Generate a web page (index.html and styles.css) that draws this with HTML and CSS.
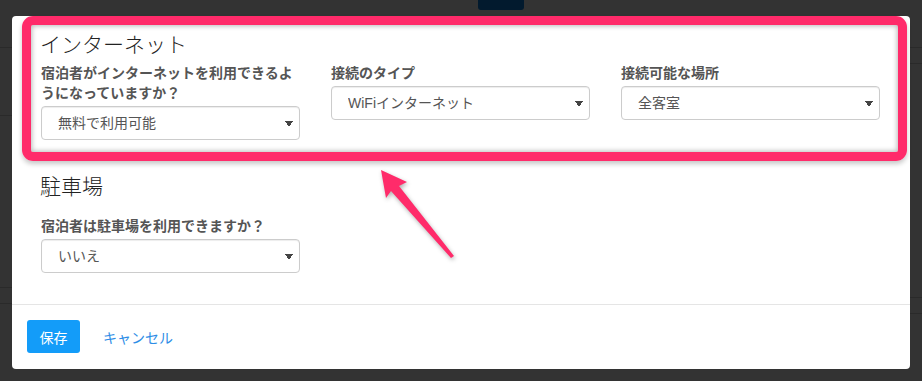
FILE: index.html
```html
<!DOCTYPE html>
<html lang="ja">
<head>
  <meta charset="UTF-8" />
  <meta name="viewport" content="width=device-width, initial-scale=1.0" />
  <title>インターネットと駐車場</title>
  <link rel="stylesheet" href="styles.css">
</head>
<body>
<div class="bg-tab"></div>
<div class="modal">
  <div class="modal-body">
    <section class="highlight">
      <h3>インターネット</h3>
      <div class="row">
        <div class="field">
          <label>宿泊者がインターネットを利用できるようになっていますか？</label>
          <select class="form-control"><option>無料で利用可能</option></select>
        </div>
        <div class="field">
          <label>接続のタイプ</label>
          <select class="form-control"><option>WiFiインターネット</option></select>
        </div>
        <div class="field">
          <label>接続可能な場所</label>
          <select class="form-control"><option>全客室</option></select>
        </div>
      </div>
    </section>
    <section class="parking">
      <h3>駐車場</h3>
      <div class="row">
        <div class="field">
          <label>宿泊者は駐車場を利用できますか？</label>
          <select class="form-control"><option>いいえ</option></select>
        </div>
      </div>
    </section>
  </div>
  <div class="modal-footer">
    <button class="btn">保存</button>
    <a class="cancel" href="#">キャンセル</a>
  </div>
</div>
<svg class="arrow" width="922" height="381" viewBox="0 0 922 381">
  <polygon points="381,170 407,182 399,186 454,256 451,258 391,191 386,198" />
</svg>
</body>
</html>
```

FILE: styles.css
```css
body { margin: 0; height: 381px; overflow: hidden; font-family: "Liberation Sans", "Noto Sans CJK JP", sans-serif; color: #333;
  background:
    linear-gradient(#2a2a2a, #2a2a2a) 0 47px / 100% 1px no-repeat,
    linear-gradient(#2a2a2a, #2a2a2a) 0 115px / 12px 1px no-repeat,
    linear-gradient(#2a2a2a, #2a2a2a) 0 287px / 12px 1px no-repeat,
    linear-gradient(#2a2a2a, #2a2a2a) 0 303px / 12px 1px no-repeat,
    linear-gradient(#2a2a2a, #2a2a2a) right 0 top 63px / 12px 1px no-repeat,
    linear-gradient(#2a2a2a, #2a2a2a) right 0 top 297px / 12px 1px no-repeat,
    linear-gradient(#2a2a2a, #2a2a2a) right 0 top 313px / 12px 1px no-repeat,
    #333;
}
.bg-tab { margin-left: 478px; width: 46px; height: 10px; background: #021a2e; border-radius: 0 0 3px 3px; }
.modal { margin: 1px 0 0 12px; width: 898px; background: #fff; border-radius: 4px; }
.highlight { margin: 6px 3px 0 10px; padding: 8px 10px 12px; border: 9px solid #ff2b6a; border-radius: 11px;
  box-shadow: inset 0 0 5px 1px rgba(0,0,0,0.28), 0 3px 5px rgba(0,0,0,0.22); }
h3 { margin: 0 0 7px -1px; font-size: 21px; line-height: 23px; font-weight: 300; color: #222; }
.row { display: grid; grid-template-columns: repeat(3, 259px); column-gap: 31px; align-items: start; }
.field label { display: block; margin-bottom: 3px; font-size: 14px; line-height: 20px; font-weight: bold; color: #555; }
.form-control { display: block; width: 100%; height: 34px; padding: 0 20px 0 16px; font: inherit; font-size: 14px; color: #555;
  background-color: #fff; border: 1px solid #ccc; border-radius: 4px; box-shadow: inset 0 1px 1px rgba(0,0,0,0.075);
  -webkit-appearance: none; appearance: none;
  background-image: linear-gradient(to top right, transparent 50%, #444 50%), linear-gradient(to bottom right, #444 50%, transparent 50%);
  background-size: 4px 6px, 4px 6px; background-repeat: no-repeat;
  background-position: right 10px top 14px, right 6px top 14px; }
.parking { margin-top: 14px; padding: 0 0 31px 29px; }
.parking h3 { margin-bottom: 18px; }
.modal-footer { display: flex; align-items: center; gap: 23px; padding: 15px 15px 16px; border-top: 1px solid #e5e5e5; }
.btn { height: 33px; width: 53px; padding: 0; border: none; border-radius: 3px; background: #139cf9; color: #fff; font: inherit; font-size: 14px; cursor: pointer; }
.cancel { color: #2d8de6; font-size: 14px; text-decoration: none; }
.arrow { position: absolute; left: 0; top: 0; pointer-events: none; fill: #ff2b6a; filter: drop-shadow(1px 2px 2px rgba(0,0,0,0.3)); }
```
